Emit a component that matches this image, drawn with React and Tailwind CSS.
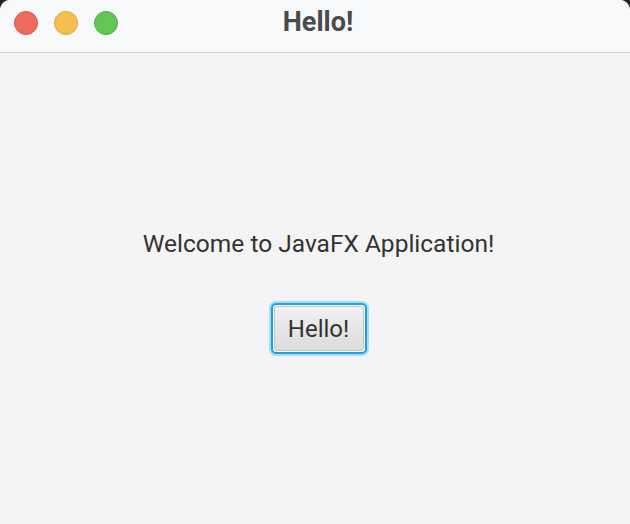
export default function App() {
  return (
    <div className="w-[630px] h-[524px] bg-[#222] overflow-hidden" style={{ fontFamily: 'Roboto, "Liberation Sans", sans-serif' }}>
      <div className="w-full h-full flex flex-col bg-[#f4f4f4] rounded-tl-[10px] rounded-tr-[10px] overflow-hidden">
        {/* title bar */}
        <div className="relative h-[53px] shrink-0 bg-[#f8f9fb] border-b border-[#d2d2d2] flex items-start">
          <div className="flex gap-[16px] pl-[14px] pt-[11px]">
            <span className="w-[24px] h-[24px] rounded-full bg-[#ee6a5f] border border-[#d9574d]" />
            <span className="w-[24px] h-[24px] rounded-full bg-[#f6be50] border border-[#dea53c]" />
            <span className="w-[24px] h-[24px] rounded-full bg-[#62c655] border border-[#4fae43]" />
          </div>
          <div className="absolute inset-x-0 top-[5px] pl-[6px] text-center text-[27px] leading-[35px] font-bold text-[#4a4a4a]">
            Hello!
          </div>
        </div>

        {/* content */}
        <div className="flex-1 flex flex-col items-center pt-[176px] pl-[7px]">
          <div className="text-[24.5px] leading-[30px] text-[#333]">Welcome to JavaFX Application!</div>
          <button className="mt-[44px] w-[96px] h-[51px] rounded-[5px] border-2 border-[#1ba1e2] shadow-[0_0_0_2px_#a9dcf3] p-[1px]">
            <div className="w-full h-full rounded-[3px] border border-[#c6c6c6] bg-gradient-to-b from-[#f1f1f1] to-[#dcdcdc] flex items-center justify-center text-[24px] text-[#333]">
              Hello!
            </div>
          </button>
        </div>
      </div>
    </div>
  )
}
